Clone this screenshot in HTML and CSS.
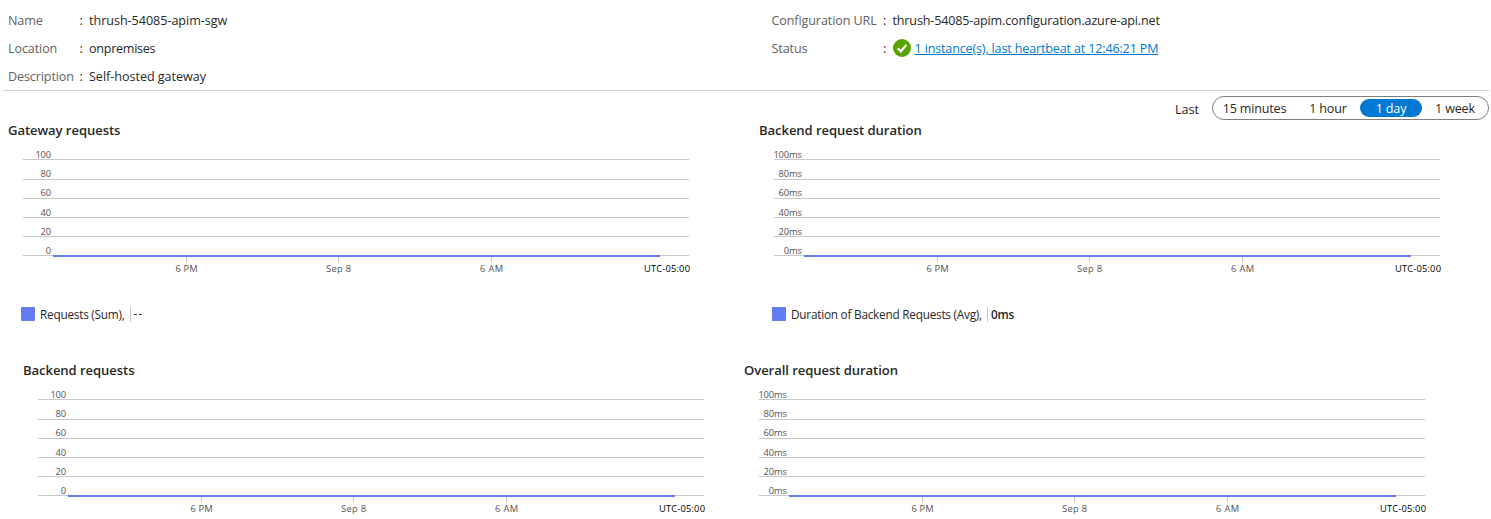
FILE: index.html
```
<!DOCTYPE html>
<html lang="en">
<head>
<meta charset="utf-8">
<title>Self-hosted gateway</title>
<link rel="stylesheet" href="styles.css">
</head>
<body>
<section class="essentials">
  <dl class="props props-left">
    <dt>Name</dt><dd><span class="t-name">thrush-54085-apim-sgw</span></dd>
    <dt>Location</dt><dd><span class="t-loc">onpremises</span></dd>
    <dt>Description</dt><dd><span class="t-name">Self-hosted gateway</span></dd>
  </dl>
  <dl class="props props-right">
    <dt>Configuration URL</dt><dd><span class="t-url">thrush-54085-apim.configuration.azure-api.net</span></dd>
    <dt>Status</dt><dd><svg class="ok" viewBox="0 0 18 18"><circle cx="9" cy="9" r="9"/><path d="M4.7 9.3 7.8 12.3 13.4 5.9"/></svg><a class="t-url" href="#">1 instance(s), last heartbeat at 12:46:21 PM</a></dd>
  </dl>
</section>
<div class="range">
  <span class="range-label">Last</span>
  <div class="pill">
    <button class="opt opt-15m">15 minutes</button>
    <button class="opt opt-hour">1 hour</button>
    <button class="opt opt-day active">1 day</button>
    <button class="opt opt-week">1 week</button>
  </div>
</div>
<main>
  <div class="row row-a">
    <section class="chart" data-unit="">
      <h2>Gateway requests</h2>
      <div class="plot"></div>
      <div class="legend"><i></i><span>Requests (Sum),</span><b class="none">--</b></div>
    </section>
    <section class="chart" data-unit="ms">
      <h2>Backend request duration</h2>
      <div class="plot"></div>
      <div class="legend"><i></i><span>Duration of Backend Requests (Avg),</span><b>0ms</b></div>
    </section>
  </div>
  <div class="row row-b">
    <section class="chart" data-unit="">
      <h2>Backend requests</h2>
      <div class="plot"></div>
    </section>
    <section class="chart" data-unit="ms">
      <h2>Overall request duration</h2>
      <div class="plot"></div>
    </section>
  </div>
</main>
<script src="charts.js"></script>
</body>
</html>
```
FILE: styles.css
```
* { box-sizing: border-box; }
body {
  margin: 0;
  background: #fff;
  color: #292827;
  font: 12.6px/20px "Open Sans", "Noto Sans", sans-serif;
}
.essentials {
  display: flex;
  height: 91px;
  margin: 0 2px 0 3px;
  padding: 7px 0 0 5px;
  border-bottom: 1px solid #d2d0ce;
}
.props {
  display: grid;
  grid-auto-rows: 28px;
  align-items: center;
  margin: 0;
  white-space: nowrap;
}
.props-left { grid-template-columns: 71.5px 1fr; width: 763.5px; }
.props-right { grid-template-columns: 111.5px 1fr; align-content: start; }
.props dt { color: #646260; letter-spacing: -0.12px; }
.props dd { display: flex; align-items: center; margin: 0; }
.props dd::before { content: ":"; width: 9.5px; }
.t-name { letter-spacing: -0.04px; }
.t-loc { letter-spacing: -0.28px; }
.t-url { letter-spacing: -0.17px; }
.ok { width: 18px; height: 18px; margin: -2px 4px 0 0; }
.ok circle { fill: #57a300; }
.ok path { fill: none; stroke: #fff; stroke-width: 2.2; }
a { color: #0078d4; text-decoration: underline; text-underline-offset: 1px; }
.range {
  display: flex;
  justify-content: flex-end;
  height: 29px;
  padding: 5px 2px 0 0;
}
.range-label { width: 37px; line-height: 27px; }
.pill {
  display: flex;
  align-items: center;
  width: 277px;
  height: 24px;
  border: 1px solid #807e7c;
  border-radius: 12px;
}
.opt {
  height: 18px;
  padding: 1px 0 0;
  border: 0;
  border-radius: 9px;
  background: none;
  color: inherit;
  font: inherit;
  line-height: 18px;
  letter-spacing: -0.2px;
  white-space: nowrap;
}
.opt-15m { width: 83px; }
.opt-hour { width: 64px; }
.opt-day { width: 62px; }
.opt-week { width: 66px; }
.opt.active { background: #0078d4; color: #fff; }
.row { display: flex; height: 240px; }
.row-a { padding-left: 8px; gap: 61px; }
.row-b { height: 159px; padding-left: 23px; gap: 31px; }
.chart { width: 690px; }
.chart h2 {
  margin: 0;
  height: 25px;
  font-size: 13.1px;
  font-weight: 600;
  line-height: 20px;
  letter-spacing: -0.08px;
  white-space: nowrap;
}
.plot { height: 134px; }
.plot svg { display: block; }
.grid { stroke: #c8c8c8; shape-rendering: crispEdges; }
.series { fill: #637cef; shape-rendering: crispEdges; }
.plot text { font-size: 9.4px; fill: #555352; }
.plot .zone { fill: #000; }
.legend {
  display: flex;
  align-items: center;
  height: 18px;
  margin: 26px 0 0 13px;
  font-size: 11.8px;
  letter-spacing: -0.24px;
  white-space: nowrap;
}
.legend i { width: 14px; height: 14px; margin-right: 5px; border-radius: 1px; background: #637cef; }
.legend b {
  height: 15px;
  margin-left: 5px;
  padding-left: 3px;
  border-left: 1px solid #c8c8c8;
  font-weight: 600;
  line-height: 15px;
}
.legend .none { font-weight: 400; line-height: 12px; letter-spacing: 0.9px; }
```
FILE: charts.js
```
const gridY = [14, 34, 53, 72, 91, 110];
const labelY = [13, 32, 51, 71, 90, 109];
const values = [100, 80, 60, 40, 20, 0];
const hours = [[178, "6 PM", 22], [330, "Sep 8", 25], [483, "6 AM", 23]];

function drawPlot(unit) {
  let out = '<svg width="690" height="134">';
  gridY.forEach((y, i) => {
    const label = values[i] + unit;
    const width = String(values[i]).length * 5.2 + (unit ? 13 : 0);
    out += `<path class="grid" d="M15 ${y + 0.5}H681"/>`;
    out += `<text x="${43 - width}" y="${labelY[i]}" textLength="${width}">${label}</text>`;
  });
  out += '<rect class="series" x="45" y="110" width="607" height="2"/>';
  hours.forEach(([x, label, width]) => {
    out += `<path class="grid" d="M${x + 0.5} 112V117"/>`;
    out += `<text x="${x - width / 2 + 0.6}" y="127" textLength="${width}">${label}</text>`;
  });
  return out + '<text class="zone" x="636" y="127" textLength="46">UTC-05:00</text></svg>';
}

document.querySelectorAll(".chart").forEach((chart) => {
  chart.querySelector(".plot").innerHTML = drawPlot(chart.dataset.unit);
});
```
